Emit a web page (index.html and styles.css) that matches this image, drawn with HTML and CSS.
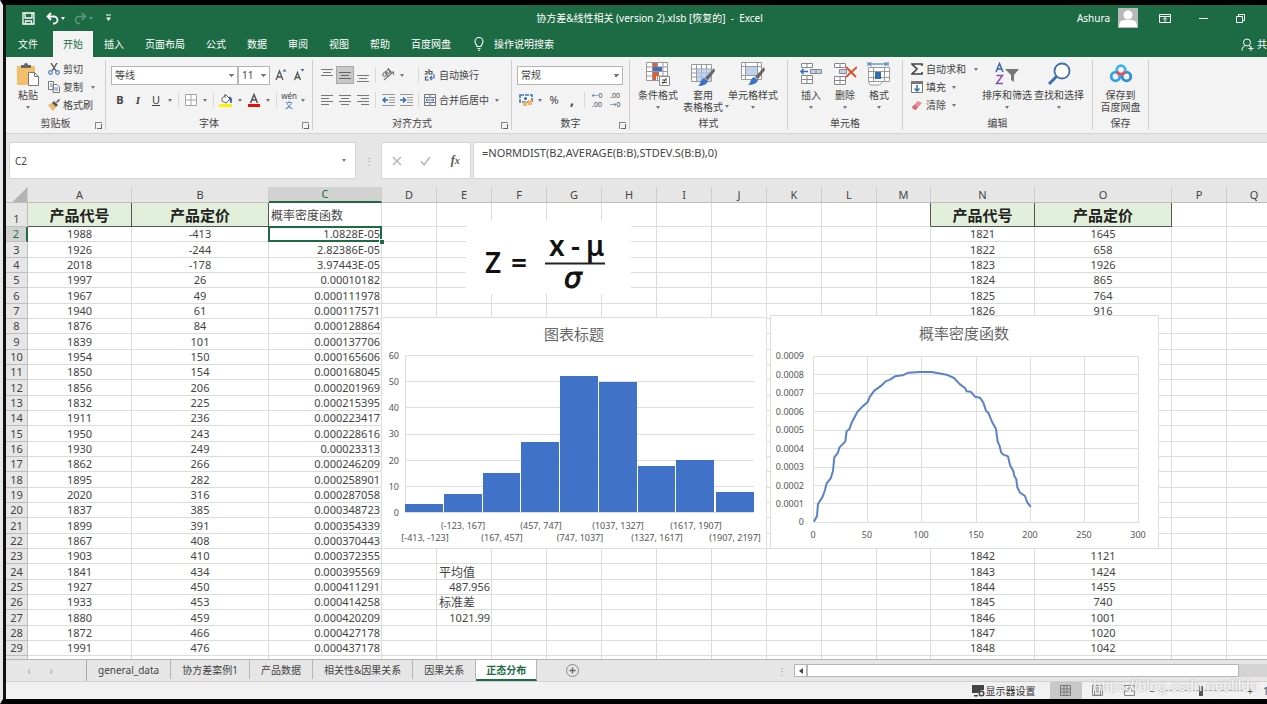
FILE: index.html
```html
<!DOCTYPE html>
<html lang="zh-CN">
<head>
<meta charset="utf-8">
<title>协方差&amp;线性相关 - Excel</title>
<link rel="stylesheet" href="styles.css">
</head>
<body>
<div class="app">
<header class="titlebar">
  <div class="quick">
    <button class="tb" aria-label="保存"><svg width="13" height="13" viewBox="0 0 13 13"><path d="M1 1h11v11H1zM3 1v5h7V1M3.500 12V9h6v3" fill="none" stroke="#fff" stroke-width="1.300"/></svg></button>
    <button class="tb" aria-label="撤消"><svg width="13" height="13" viewBox="0 0 13 13"><path d="M5 1L1.500 4.500 5 8M2 4.500h6a3.500 3.500 0 0 1 0 7H7" fill="none" stroke="#fff" stroke-width="1.800"/></svg></button>
    <span class="caret light"></span>
    <button class="tb dim" aria-label="恢复"><svg width="13" height="13" viewBox="0 0 13 13"><path d="M8 1l3.500 3.500L8 8M11 4.500H5a3.500 3.500 0 0 0 0 7h1" fill="none" stroke="#fff" stroke-width="1.500"/></svg></button>
    <span class="caret light dim"></span>
    <button class="tb" aria-label="自定义"><svg width="7" height="8" viewBox="0 0 7 8"><path d="M1 1h5" stroke="#fff"/><path d="M1 3.500h5L3.500 7z" fill="#fff"/></svg></button>
  </div>
  <div class="doc">协方差&amp;线性相关 (version 2).xlsb [恢复的]&nbsp; -&nbsp; Excel</div>
  <div class="account">
    <span class="user">Ashura</span>
    <svg class="avatar" width="20" height="20" viewBox="0 0 20 20"><path d="M0 0h20v20H0z" fill="#b9b9b9"/><circle cx="10" cy="7" r="4.500" fill="#fff"/><path d="M1 19c0-8 5-7 9-7s9-1 9 7z" fill="#fff"/></svg>
    <button class="tb" aria-label="功能区显示选项"><svg width="12" height="9" viewBox="0 0 12 9"><path d="M.5.5h11v8H.5zM.5 2.500h11M6 8V4M4 5.500l2-2 2 2" fill="none" stroke="#fff"/></svg></button>
    <button class="tb" aria-label="最小化"><svg width="9" height="3" viewBox="0 0 9 3"><path d="M0 1.500h9" stroke="#fff"/></svg></button>
    <button class="tb" aria-label="还原"><svg width="9" height="9" viewBox="0 0 9 9"><path d="M.5 2.500h6v6h-6zM2.500 2V.5h6v6H7" fill="none" stroke="#fff"/></svg></button>
  </div>
</header>
<nav class="tabs">
  <button class="file">文件</button><button class="active">开始</button><button>插入</button><button>页面布局</button><button>公式</button><button>数据</button><button>审阅</button><button>视图</button><button>帮助</button><button>百度网盘</button>
  <button class="tell"><svg width="10" height="14" viewBox="0 0 10 14"><path d="M3 9.500C3 7.500 1 7 1 4.500a4 4 0 0 1 8 0C9 7 7 7.500 7 9.500zM3.500 11.500h3M4 13.300h2" fill="none" stroke="#fff" stroke-width="1.100"/></svg>操作说明搜索</button>
  <button class="share"><svg width="13" height="13" viewBox="0 0 13 13"><circle cx="6" cy="4.500" r="3.500" fill="none" stroke="#fff"/><path d="M1 12.500C1 9 3 8 4.500 7.500M7.500 7.500l2 1.500M10 8v5M7.500 10.500h5" fill="none" stroke="#fff"/></svg>共享</button>
</nav>

<section class="ribbon">
  <div class="group clip">
    <div class="body">
      <button class="big"><svg width="24" height="25" viewBox="0 0 24 25"><path d="M1 4h18v19H1z" fill="#f2c06d"/><path d="M5 5V3h3a2 2 0 0 1 4 0h3v3H5z" fill="#666"/><path d="M12.500 10.500h6l4 4v9h-10z" fill="#fff" stroke="#777"/><path d="M18.500 10.500v4h4" fill="none" stroke="#777"/></svg><span>粘贴</span><i class="caret"></i></button>
      <div class="stack">
        <button><svg width="12" height="12" viewBox="0 0 12 12"><path d="M3 0l5 8M9 0L4 8" stroke="#555" stroke-width="1.400"/><circle cx="2.500" cy="9.500" r="1.800" fill="none" stroke="#4a7ebb" stroke-width="1.200"/><circle cx="9.500" cy="9.500" r="1.800" fill="none" stroke="#4a7ebb" stroke-width="1.200"/></svg>剪切</button>
        <button><svg width="12" height="12" viewBox="0 0 12 12"><path d="M.5.5h5v8h-5zM5 3.500h4l2.500 2.500v5.500H5z" fill="#fff" stroke="#777"/><path d="M2 3h2M2 5h2M6.500 7h3.500M6.500 9h3.500" stroke="#4a7ebb"/></svg>复制<i class="caret gap"></i></button>
        <button><svg width="12" height="12" viewBox="0 0 12 12"><path d="M0 6l4-2 4 4-3 4z" fill="#f2b668"/><path d="M4 4l2-2 4 4-2 2zM8 3l3-3 1 1-3 3z" fill="#555"/></svg>格式刷</button>
      </div>
    </div>
    <div class="foot">剪贴板<i class="launch"></i></div>
  </div>

  <div class="group font">
    <div class="rows">
      <div class="row"><select class="fontname" aria-label="字体"><option>等线</option></select><select class="fontsize" aria-label="字号"><option>11</option></select>
        <button class="ic" aria-label="增大字号"><svg width="14" height="14" viewBox="0 0 14 14"><path d="M2 12L5.500 3 9 12M3.500 9h4" fill="none" stroke="#555" stroke-width="1.300"/><path d="M8.500 3.500L10.500 1l2 2.500z" fill="#3b64a8"/></svg></button><button class="ic" aria-label="减小字号"><svg width="14" height="14" viewBox="0 0 14 14"><path d="M2.500 12l3-7.500 3 7.500M3.500 9.500h4" fill="none" stroke="#555" stroke-width="1.300"/><path d="M8.500 1h4l-2 2.500z" fill="#3b64a8"/></svg></button></div>
      <div class="row"><button class="ic"><b>B</b></button><button class="ic"><em>I</em></button><button class="ic"><u>U</u></button><i class="caret"></i><i class="sep"></i>
        <button class="ic" aria-label="边框"><svg width="12" height="12" viewBox="0 0 12 12"><path d="M.5.5h11v11H.5zM6 0v12M0 6h12" fill="#fff" stroke="#a5a5a5"/></svg></button><i class="caret"></i><i class="sep"></i>
        <button class="ic" aria-label="填充颜色"><svg width="14" height="14" viewBox="0 0 14 14"><path d="M3 5l4-3 4 4-4 4-4-2zM6 1v4" fill="#fff" stroke="#666"/><path d="M10 4c3 0 3 3 2 6z" fill="#3b64a8" stroke="#3b64a8"/><path d="M0 11h13v3H0z" fill="#fff100"/></svg></button><i class="caret"></i>
        <button class="ic" aria-label="字体颜色"><svg width="14" height="14" viewBox="0 0 14 14"><path d="M3.500 10L7 1.500l3.500 8.500M5 7h4" fill="none" stroke="#555" stroke-width="1.500"/><path d="M1 11h12v3H1z" fill="#e8110a"/></svg></button><i class="caret"></i><i class="sep"></i>
        <button class="ic wen"><span>wén</span><span>文</span></button><i class="caret"></i></div>
    </div>
    <div class="foot">字体<i class="launch"></i></div>
  </div>

  <div class="group align">
    <div class="rows">
      <div class="row"><button class="ic" aria-label="顶端对齐"><svg width="12" height="14" viewBox="0 0 12 14"><path d="M0 1.500h12M2 4.500h8M0 7.500h12" stroke="#777"/></svg></button><button class="ic on" aria-label="垂直居中"><svg width="12" height="14" viewBox="0 0 12 14"><path d="M0 4.500h12M2 7.500h8M0 10.500h12" stroke="#666"/></svg></button><button class="ic" aria-label="底端对齐"><svg width="12" height="14" viewBox="0 0 12 14"><path d="M0 7.500h12M2 10.500h8M0 13.500h12" stroke="#777"/></svg></button><i class="sep"></i>
        <button class="ic" aria-label="方向"><svg width="14" height="14" viewBox="0 0 14 14"><path d="M3 12L12 4M9 4h3.500v3" fill="none" stroke="#777" stroke-width="1.200"/><circle cx="3.500" cy="6.500" r="1.800" fill="none" stroke="#555"/><circle cx="7.500" cy="3.500" r="1.800" fill="none" stroke="#555"/><path d="M4 3l3 5M7 0l2 4" stroke="#555"/></svg></button><i class="caret"></i><i class="fill"></i><i class="sep"></i>
        <button class="lab"><svg width="12" height="14" viewBox="0 0 12 14"><path d="M5 12H1.500V9H4M5 1v5h3V3.500H5M1 3.500h2V6H.5" fill="none" stroke="#555" stroke-width="1.200"/><path d="M10 6v4H6.500M8 8l-2 2 2 2" fill="none" stroke="#3b74c0" stroke-width="1.200"/></svg>自动换行</button></div>
      <div class="row"><button class="ic" aria-label="左对齐"><svg width="12" height="12" viewBox="0 0 12 12"><path d="M0 1.500h12M0 4.500h8M0 7.500h12M0 10.500h8" stroke="#777"/></svg></button><button class="ic" aria-label="居中"><svg width="12" height="12" viewBox="0 0 12 12"><path d="M0 1.500h12M2 4.500h8M0 7.500h12M2 10.500h8" stroke="#777"/></svg></button><button class="ic" aria-label="右对齐"><svg width="12" height="12" viewBox="0 0 12 12"><path d="M0 1.500h12M4 4.500h8M0 7.500h12M4 10.500h8" stroke="#777"/></svg></button><i class="sep"></i>
        <button class="ic" aria-label="减少缩进"><svg width="13" height="12" viewBox="0 0 13 12"><path d="M0 .5h13M7 3.500h6M7 6h6M7 8.500h6M0 11.500h13" stroke="#999"/><path d="M6 6H1M3.500 3.500L1 6l2.500 2.500" fill="none" stroke="#2f6db5" stroke-width="1.500"/></svg></button><button class="ic" aria-label="增加缩进"><svg width="13" height="12" viewBox="0 0 13 12"><path d="M0 .5h13M7 3.500h6M7 6h6M7 8.500h6M0 11.500h13" stroke="#999"/><path d="M0 6h5M3 3.500L5.500 6 3 8.500" fill="none" stroke="#2f6db5" stroke-width="1.500"/></svg></button><i class="sep"></i>
        <button class="lab"><svg width="12" height="12" viewBox="0 0 12 12"><path d="M.5.5h11v11H.5zM0 3.500h12M0 8.500h12M6 0v3M6 9v3" fill="none" stroke="#777"/><path d="M2 6h8M3.500 4.500L2 6l1.500 1.500M8.500 4.500L10 6 8.500 7.500" fill="none" stroke="#3b74c0"/></svg>合并后居中<i class="caret"></i></button></div>
    </div>
    <div class="foot">对齐方式<i class="launch"></i></div>
  </div>

  <div class="group number">
    <div class="rows">
      <div class="row"><select class="numfmt" aria-label="数字格式"><option>常规</option></select></div>
      <div class="row"><button class="ic" aria-label="会计数字格式"><svg width="14" height="13" viewBox="0 0 14 13"><path d="M1 1h12v7H1z" fill="#fff" stroke="#3b74c0" stroke-width="1.600" stroke-dasharray="4 1"/><circle cx="6.500" cy="4.500" r="1.600" fill="#3b74c0"/><path d="M4 8h4v4H4zM9 6h4v5H9z" fill="#f2b668"/></svg></button><i class="caret"></i><button class="ic">%</button><button class="ic comma"><b>,</b></button><i class="sep"></i>
        <button class="ic dec"><span><i class="arr">←</i>0</span><span>.00</span></button><button class="ic dec"><span>.00</span><span><i class="arr">→</i>0</span></button></div>
    </div>
    <div class="foot">数字<i class="launch"></i></div>
  </div>

  <div class="group styles">
    <div class="body">
      <button class="big"><svg width="26" height="25" viewBox="0 0 26 25"><path d="M1.500.5h21v18h-21zM1 5h22M1 9.500h22M1 14h22M7.500 0v19M12.500 0v19M18 0v19" fill="#fff" stroke="#999"/><path d="M8 1h4v4H8z" fill="#d9603b"/><path d="M8 5h9v4H8z" fill="#3b74c0"/><path d="M8 10h6v4H8zM8 14h3v4H8z" fill="#d9603b"/><path d="M14.500 14.500h10v9h-10z" fill="#fff" stroke="#888"/><path d="M17 18h5M17 20.500h5M21.500 16l-4 6" stroke="#444"/></svg><span>条件格式</span><i class="caret"></i></button>
      <button class="big"><svg width="26" height="25" viewBox="0 0 26 25"><path d="M1.500 2.500h20v17h-20zM1 7h20M1 11h20M1 15h20M6.500 2v17M11.500 2v17M16.500 2v17" fill="#fff" stroke="#999"/><path d="M7 7h14v12H7z" fill="#a9c4e6" opacity=".7"/><path d="M24 6l1 3-7 9-3-2z" fill="#666"/><path d="M14 16l4 3c-1 4-6 5-10 5 3-2 2-6 6-8z" fill="#3b74c0"/></svg><span>套用<br>表格格式</span><i class="caret side"></i></button>
      <button class="big"><svg width="26" height="25" viewBox="0 0 26 25"><path d="M1.500.5h20v17h-20zM1 4.500h20M1 13.500h20M5.500 0v18M17.500 0v18" fill="#fff" stroke="#999"/><path d="M6 5h11v8H6z" fill="#bcd2ee"/><path d="M24 5l1 3-7 9-3-2z" fill="#666"/><path d="M14 15l4 3c-1 4-6 5-10 5 3-2 2-6 6-8z" fill="#3b74c0"/></svg><span>单元格样式</span><i class="caret"></i></button>
    </div>
    <div class="foot">样式</div>
  </div>

  <div class="group cells">
    <div class="body">
      <button class="big"><svg width="24" height="25" viewBox="0 0 24 25"><path d="M2.500 1.500h11v4h-11zM8 1v5M2.500 13.500h11v8h-11zM8 13v9M2 17.500h12" fill="#fff" stroke="#888"/><path d="M11.500 7.500h11v4h-11zM17 7v5" fill="#bcd2ee" stroke="#888"/><path d="M9 9.500H2M4.500 7L2 9.500 4.500 12" fill="none" stroke="#2f6db5" stroke-width="1.500"/></svg><span>插入</span><i class="caret"></i></button>
      <button class="big"><svg width="24" height="25" viewBox="0 0 24 25"><path d="M1.500 1.500h11v4h-11zM7 1v5M1.500 14.500h11v8h-11zM7 14v9M1 18.500h12" fill="#fff" stroke="#888"/><path d="M6.500 7.500h7v4h-7z" fill="#bcd2ee" stroke="#888"/><path d="M13 5l10 10M24 5L13 15" stroke="#d9532c" stroke-width="2"/></svg><span>删除</span><i class="caret"></i></button>
      <button class="big"><svg width="24" height="25" viewBox="0 0 24 25"><path d="M1.500 5.500h21v14h-21zM1 9.500h22M1 15.500h22M6.500 5v15M17.500 5v15M1.500 20l2 3h9l3-3" fill="#fff" stroke="#999"/><path d="M8 10h6v7H8z" fill="#2f6db5"/><path d="M2 2h18M4.500 0L2 2l2.500 2M17.500 0L20 2l-2.500 2M1 0v4M21 0v4" fill="none" stroke="#2f6db5"/></svg><span>格式</span><i class="caret"></i></button>
    </div>
    <div class="foot">单元格</div>
  </div>

  <div class="group edit">
    <div class="body">
      <div class="stack">
        <button><svg width="12" height="12" viewBox="0 0 12 12"><path d="M11 3V1H1l5 5-5 5h10V9" fill="none" stroke="#444" stroke-width="1.600"/></svg>自动求和<i class="caret gap"></i></button>
        <button><svg width="12" height="12" viewBox="0 0 12 12"><path d="M.5.5h11v11H.5z" fill="#fff" stroke="#777"/><path d="M0 0h12v3H0z" fill="#777"/><path d="M6 4v6M3.500 7.500L6 10l2.500-2.500" fill="none" stroke="#2f6db5" stroke-width="1.500"/></svg>填充<i class="caret"></i></button>
        <button><svg width="12" height="12" viewBox="0 0 12 12"><path d="M1 8l6-6 4 2-6 6z" fill="#e58a97"/><path d="M1 8l2-2 4 2-2 3-3-1z" fill="#d7697b"/></svg>清除<i class="caret"></i></button>
      </div>
      <button class="big"><svg width="26" height="25" viewBox="0 0 26 25"><path d="M2 10L5.500 1.500 9 10M3 7h5" fill="none" stroke="#3b64b0" stroke-width="1.500"/><path d="M2.500 13.500h6l-6 8h6.500" fill="none" stroke="#8a4fb5" stroke-width="1.500"/><path d="M11 7h14l-5 6v7l-3-2v-5z" fill="#777"/></svg><span>排序和筛选</span><i class="caret"></i></button>
      <button class="big"><svg width="26" height="25" viewBox="0 0 26 25"><circle cx="16" cy="9" r="7.500" fill="#fff" stroke="#3f6fae" stroke-width="1.800"/><path d="M10.500 14.500L3 22" stroke="#3f6fae" stroke-width="3"/></svg><span>查找和选择</span><i class="caret"></i></button>
    </div>
    <div class="foot">编辑</div>
  </div>

  <div class="group save">
    <div class="body">
      <button class="big"><svg width="24" height="25" viewBox="0 0 24 25"><circle cx="6.500" cy="14.500" r="4.300" fill="none" stroke="#2ca5e8" stroke-width="2.800"/><circle cx="17.500" cy="14.500" r="4.300" fill="none" stroke="#2b8fe0" stroke-width="2.800"/><circle cx="12" cy="8" r="4.300" fill="none" stroke="#35b6ea" stroke-width="2.800"/><path d="M8 9.500a4.300 4.300 0 0 0 8 0" fill="none" stroke="#ee4b55" stroke-width="2.800"/></svg><span>保存到<br>百度网盘</span></button>
    </div>
    <div class="foot">保存</div>
  </div>
</section>

<section class="formulabar">
  <div class="namebox"><input value="C2" aria-label="名称框"><i class="caret"></i></div>
  <span class="dots">⋮</span>
  <div class="fx">
    <button aria-label="取消"><svg width="10" height="10" viewBox="0 0 10 10"><path d="M1 1l8 8M9 1L1 9" stroke="#b5b5b5" stroke-width="1.400"/></svg></button>
    <button aria-label="输入"><svg width="11" height="10" viewBox="0 0 11 10"><path d="M1 5l3 4 6-8" fill="none" stroke="#b5b5b5" stroke-width="1.400"/></svg></button>
    <button class="fn">f<small>x</small></button>
  </div>
  <input class="formula" aria-label="编辑栏" value="=NORMDIST(B2,AVERAGE(B:B),STDEV.S(B:B),0)">
</section>

<main class="sheet">
<table>
<colgroup><col class="c-h"><col class="c-a"><col class="c-b"><col class="c-c"><col class="c-s" span="9"><col class="c-m"><col class="c-a"><col class="c-b"><col class="c-s"><col></colgroup>
<thead><tr><th class="corner"><th>A<th>B<th class="sel">C<th>D<th>E<th>F<th>G<th>H<th>I<th>J<th>K<th>L<th>M<th>N<th>O<th>P<th>Q</thead>
<tbody>
<tr class="first"><th>1<td class="hd">产品代号<td class="hd">产品定价<td class="txt">概率密度函数<td><td><td><td><td><td><td><td><td><td class="pre"><td class="hd">产品代号<td class="hd">产品定价<td><td>
<tr><th class="sel">2<td>1988<td>-413<td class="cur">1.0828E-05<td><td><td><td><td><td><td><td><td><td><td>1821<td>1645<td><td>
<tr><th>3<td>1926<td>-244<td>2.82386E-05<td><td><td><td><td><td><td><td><td><td><td>1822<td>658<td><td>
<tr><th>4<td>2018<td>-178<td>3.97443E-05<td><td><td><td><td><td><td><td><td><td><td>1823<td>1926<td><td>
<tr><th>5<td>1997<td>26<td>0.00010182<td><td><td><td><td><td><td><td><td><td><td>1824<td>865<td><td>
<tr><th>6<td>1967<td>49<td>0.000111978<td><td><td><td><td><td><td><td><td><td><td>1825<td>764<td><td>
<tr><th>7<td>1940<td>61<td>0.000117571<td><td><td><td><td><td><td><td><td><td><td>1826<td>916<td><td>
<tr><th>8<td>1876<td>84<td>0.000128864<td><td><td><td><td><td><td><td><td><td><td><td><td><td>
<tr><th>9<td>1839<td>101<td>0.000137706<td><td><td><td><td><td><td><td><td><td><td><td><td><td>
<tr><th>10<td>1954<td>150<td>0.000165606<td><td><td><td><td><td><td><td><td><td><td><td><td><td>
<tr><th>11<td>1850<td>154<td>0.000168045<td><td><td><td><td><td><td><td><td><td><td><td><td><td>
<tr><th>12<td>1856<td>206<td>0.000201969<td><td><td><td><td><td><td><td><td><td><td><td><td><td>
<tr><th>13<td>1832<td>225<td>0.000215395<td><td><td><td><td><td><td><td><td><td><td><td><td><td>
<tr><th>14<td>1911<td>236<td>0.000223417<td><td><td><td><td><td><td><td><td><td><td><td><td><td>
<tr><th>15<td>1950<td>243<td>0.000228616<td><td><td><td><td><td><td><td><td><td><td><td><td><td>
<tr><th>16<td>1930<td>249<td>0.00023313<td><td><td><td><td><td><td><td><td><td><td><td><td><td>
<tr><th>17<td>1862<td>266<td>0.000246209<td><td><td><td><td><td><td><td><td><td><td><td><td><td>
<tr><th>18<td>1895<td>282<td>0.000258901<td><td><td><td><td><td><td><td><td><td><td><td><td><td>
<tr><th>19<td>2020<td>316<td>0.000287058<td><td><td><td><td><td><td><td><td><td><td><td><td><td>
<tr><th>20<td>1837<td>385<td>0.000348723<td><td><td><td><td><td><td><td><td><td><td><td><td><td>
<tr><th>21<td>1899<td>391<td>0.000354339<td><td><td><td><td><td><td><td><td><td><td><td><td><td>
<tr><th>22<td>1867<td>408<td>0.000370443<td><td><td><td><td><td><td><td><td><td><td><td><td><td>
<tr><th>23<td>1903<td>410<td>0.000372355<td><td><td><td><td><td><td><td><td><td><td>1842<td>1121<td><td>
<tr><th>24<td>1841<td>434<td>0.000395569<td><td class="txt">平均值<td><td><td><td><td><td><td><td><td>1843<td>1424<td><td>
<tr><th>25<td>1927<td>450<td>0.000411291<td><td class="num">487.956<td><td><td><td><td><td><td><td><td>1844<td>1455<td><td>
<tr><th>26<td>1933<td>453<td>0.000414258<td><td class="txt">标准差<td><td><td><td><td><td><td><td><td>1845<td>740<td><td>
<tr><th>27<td>1880<td>459<td>0.000420209<td><td class="num">1021.99<td><td><td><td><td><td><td><td><td>1846<td>1001<td><td>
<tr><th>28<td>1872<td>466<td>0.000427178<td><td><td><td><td><td><td><td><td><td><td>1847<td>1020<td><td>
<tr><th>29<td>1991<td>476<td>0.000437178<td><td><td><td><td><td><td><td><td><td><td>1848<td>1042<td><td>
<tr><th><td><td><td><td><td><td><td><td><td><td><td><td><td><td><td><td><td>
</tbody>
</table>

<svg class="zscore" viewBox="466 221 165 73" width="165" height="73">
  <text x="485" y="273" class="zt">Z</text><text x="511" y="273" class="zt">=</text>
  <text x="549" y="256" class="zt">x</text><text x="571" y="256" class="zt">-</text><text x="586" y="256" class="zt">μ</text>
  <path d="M545 263.500h60" stroke="#222" stroke-width="2"/>
  <text x="564" y="288" class="zt it">σ</text>
</svg>

<svg class="hist" viewBox="382 318 384 230" width="384" height="230">
  <text x="574" y="340" class="ct">图表标题</text>
  <path d="M405 355.500h349M405 381.500h349M405 407.500h349M405 434.500h349M405 460.500h349M405 486.500h349M405 512.500h349M405.500 355v157" stroke="#dedede" fill="none"/>
  <path d="M405 504h38v8h-38zM444 494h38v18h-38zM483 473h37v39h-37zM521 442h38v70h-38zM560 376h38v136h-38zM599 382h38v130h-38zM638 466h37v46h-37zM676 460h38v52h-38zM716 492h38v20h-38z" fill="#4072c7"/>
  <g class="ax end"><text x="399" y="359">60</text><text x="399" y="385">50</text><text x="399" y="411">40</text><text x="399" y="437">30</text><text x="399" y="464">20</text><text x="399" y="490">10</text><text x="399" y="516">0</text></g>
  <g class="ax mid"><text x="463" y="529">(-123, 167]</text><text x="541" y="529">(457, 747]</text><text x="618" y="529">(1037, 1327]</text><text x="696" y="529">(1617, 1907]</text><text x="425" y="541">[-413, -123]</text><text x="502" y="541">(167, 457]</text><text x="580" y="541">(747, 1037]</text><text x="657" y="541">(1327, 1617]</text><text x="735" y="541">(1907, 2197]</text></g>
</svg>

<svg class="density" viewBox="771 316 387 232" width="387" height="232">
  <text x="964" y="339" class="ct">概率密度函数</text>
  <path d="M813 356.500h326M813 374.500h326M813 393.500h326M813 411.500h326M813 430.500h326M813 448.500h326M813 467.500h326M813 485.500h326M813 503.500h326M813 522.500h326M813.500 356v166M867.500 356v166M921.500 356v166M976.500 356v166M1030.500 356v166M1084.500 356v166M1138.500 356v166" stroke="#dedede" fill="none"/>
  <path transform="translate(760 370) scale(.3333)" d="M163 453L171 438 174 402 188 380 195 360 200 340 212 325 219 303 223 262 234 248 238 233 256 214 260 183 268 178 275 158 292 126 307 110 323 96 330 80 343 62 365 46 377 34 390 29 405 19 428 16 445 8 480 6 515 6 560 14 582 24 600 43 615 54 620 64 632 65 645 80 660 83 670 98 678 122 685 128 696 155 708 177 713 215 718 225 724 248 730 254 744 259 750 285 760 303 763 318 769 328 772 352 780 368 795 378 802 397 811 409" fill="none" stroke="#5a82c8" stroke-width="6" stroke-linejoin="round" stroke-linecap="round"/>
  <g class="ax end"><text x="804" y="359">0.0009</text><text x="804" y="378">0.0008</text><text x="804" y="396">0.0007</text><text x="804" y="415">0.0006</text><text x="804" y="433">0.0005</text><text x="804" y="452">0.0004</text><text x="804" y="470">0.0003</text><text x="804" y="489">0.0002</text><text x="804" y="507">0.0001</text><text x="804" y="525">0</text></g>
  <g class="ax mid"><text x="813" y="538">0</text><text x="867" y="538">50</text><text x="921" y="538">100</text><text x="976" y="538">150</text><text x="1030" y="538">200</text><text x="1084" y="538">250</text><text x="1138" y="538">300</text></g>
</svg>
</main>

<nav class="sheettabs">
  <button class="nav" aria-label="上一个">‹</button><button class="nav" aria-label="下一个">›</button>
  <div class="list"><button>general_data</button><button>协方差案例1</button><button>产品数据</button><button>相关性&amp;因果关系</button><button>因果关系</button><button class="active">正态分布</button></div>
  <button class="add" aria-label="新工作表"><svg width="13" height="13" viewBox="0 0 13 13"><circle cx="6.500" cy="6.500" r="6" fill="none" stroke="#888"/><path d="M6.500 3.500v6M3.500 6.500h6" stroke="#666" stroke-width="1.300"/></svg></button>
  <span class="dots">⋮</span>
  <div class="hscroll"><button aria-label="向左滚动"><svg width="4" height="6" viewBox="0 0 4 6"><path d="M4 0v6L0 3z" fill="#444"/></svg></button><div class="track"><div class="thumb"></div></div></div>
</nav>

<footer class="status">
  <button class="disp"><svg width="13" height="12" viewBox="0 0 13 12"><path d="M0 0h12v5H9L6 8H0zM2 10h4v1.500H2z" fill="#444"/><circle cx="9.500" cy="8.500" r="2.300" fill="none" stroke="#444" stroke-width="1.500"/></svg>显示器设置</button>
  <button class="view on" aria-label="普通"><svg width="11" height="11" viewBox="0 0 11 11"><path d="M.5.5h10v10H.5zM4 0v11M7 0v11M0 4h11M0 7h11" fill="none" stroke="#777"/></svg></button>
  <button class="view" aria-label="页面布局"><svg width="11" height="11" viewBox="0 0 11 11"><path d="M.5.5h10v10H.5zM2.500 3h6v7h-6zM4 5h3M4 7h3" fill="none" stroke="#888"/></svg></button>
  <button class="view" aria-label="分页预览"><svg width="11" height="11" viewBox="0 0 11 11"><path d="M.5.5h10v10H.5zM0 6h4V3h3v3h4" fill="none" stroke="#888"/></svg></button>
  <div class="zoom"><span>−</span><input type="range" aria-label="显示比例" value="50"><span>+</span></div>
  <span class="pct">100%</span>
  <span class="mark">https://blog.csdn.net/lildn</span>
</footer>
</div>
</body>
</html>
```
FILE: styles.css
```css
* { box-sizing: border-box; }
html, body { margin: 0; height: 100%; }
body {
  background: #000;
  overflow: hidden;
  font: 10px/14px "Noto Sans", "Noto Sans CJK SC", sans-serif;
  color: #444;
}
button, input, select { font: inherit; color: inherit; border: 0; background: none; padding: 0; margin: 0; }
button { display: flex; align-items: center; justify-content: center; white-space: nowrap; }
svg { display: block; flex: none; }
i { font-style: normal; }

.app {
  height: 100vh;
  border: solid #000;
  border-width: 5px 0 5px 3px;
  border-left-color: #e9e9e9;
  box-shadow: inset 3px 0 #111;
  padding-left: 3px;
  display: flex;
  flex-direction: column;
  background: #e6e6e6;
}
.app > * { flex: none; }

.caret { width: 10px; flex: none; display: flex; justify-content: center; }
.caret::after { content: ""; border: 2px solid transparent; border-top: 3px solid #777; border-bottom: 0; }
.caret.light::after { border-top-color: #fff; }
.caret.gap { margin-left: 2px; }
.dim { opacity: .3; }

/* Title bar */
.titlebar { height: 26px; background: #1d6b45; color: #fff; display: grid; grid-template-columns: 1fr auto 1fr; align-items: center; padding-left: 16px; }
.quick { display: flex; align-items: center; }
.quick .tb { width: 12px; }
.quick .tb:first-child { margin-right: 12px; }
.quick .tb:nth-child(4) { margin-left: 6px; }
.quick .tb:last-child { margin-left: 6px; }
.doc { padding-left: 10px; white-space: pre; }
.account { display: flex; align-items: center; justify-content: flex-end; padding-right: 22px; }
.user { margin-right: 8px; }
.avatar { margin-right: 21px; }
.account .tb + .tb { margin-left: 28px; }

/* Ribbon tabs */
.tabs { height: 26px; background: #1d6b45; display: flex; gap: 1px; padding-left: 2px; color: #fff; }
.tabs button { padding: 0 10px; flex: none; }
.tabs .file { margin-right: 4px; }
.tabs .active { background: #f3f3f3; color: #1d6b45; }
.tabs .tell { gap: 10px; padding: 0; margin-left: 12px; }
.tabs .share { margin-left: auto; width: 26px; padding: 0; gap: 3px; justify-content: flex-start; }

/* Ribbon */
.ribbon { height: 77px; background: #f3f3f3; display: flex; border-bottom: 1px solid #d4d4d4; padding: 3px 0; }
.group { display: flex; flex-direction: column; border-right: 1px solid #cfcfcf; flex: none; }
.clip { width: 100px; }
.font { width: 207px; }
.align { width: 199px; }
.number { width: 118px; }
.styles { width: 158px; }
.cells { width: 115px; }
.edit { width: 190px; }
.save { width: 56px; }
.body { flex: 1; display: flex; justify-content: center; }
.foot { height: 14px; display: flex; align-items: center; justify-content: center; position: relative; }
.launch { position: absolute; right: 3px; bottom: 1px; width: 7px; height: 7px; border: solid #888; border-width: 1px 0 0 1px; }
.launch::after { content: ""; position: absolute; right: 0; bottom: 0; width: 4px; height: 4px; border: solid #666; border-width: 0 1px 1px 0; }
.big { flex-direction: column; justify-content: flex-start; line-height: 12px; position: relative; padding-top: 2px; }
.big span { margin-top: 2px; }
.big .caret { height: 12px; align-items: center; }
.big .side { position: absolute; right: -9px; bottom: 4px; }
.stack { display: flex; flex-direction: column; }
.stack button { height: 18px; gap: 3px; justify-content: flex-start; }
.clip .body { justify-content: flex-start; padding-left: 10px; gap: 8px; }
.styles .body { gap: 5px; padding-right: 1px; }
.cells .big { width: 34px; }
.edit .body { justify-content: flex-start; padding-left: 8px; }
.edit .stack { width: 70px; }
.edit .big { width: 52px; }

.rows { flex: 1; padding: 5px 0 0 5px; display: flex; flex-direction: column; gap: 5px; }
.row { display: flex; height: 20px; align-items: center; }
.ic { width: 18px; height: 18px; flex: none; font-size: 11px; }
.ic em { font-family: "Liberation Serif", serif; font-weight: bold; }
.comma { font-size: 14px; }
.on { background: #c8c8c8; border: 1px solid #a8a8a8; }
.sep { width: 1px; height: 16px; background: #d9d9d9; margin: 0 3px; flex: none; }
.fill { width: 8px; }
.lab { gap: 3px; margin-left: 2px; }
.wen, .dec { flex-direction: column; font-size: 8px; line-height: 9px; }
.dec { font-size: 7px; }
.wen span:last-child, .arr { color: #2f6db5; }
select {
  appearance: none; height: 19px; border: 1px solid #b5b5b5; padding-left: 3px;
  background: #fff conic-gradient(from -45deg at 50% 100%, #777 90deg, #fff 0) no-repeat right 3px center / 6px 3px;
}
.fontname { width: 127px; }
.fontsize { width: 32px; margin-right: 2px; }
.numfmt { width: 106px; }

/* Formula bar */
.formulabar { height: 53px; display: flex; padding: 8px 0; }
.namebox { width: 347px; margin-left: 3px; background: #fff; border: 1px solid #d6d6d6; display: flex; align-items: center; padding: 0 6px 0 5px; }
.namebox input { flex: 1; min-width: 0; }
.dots { width: 25px; text-align: center; align-self: center; color: #999; }
.fx { width: 90px; background: #fff; border: 1px solid #d6d6d6; display: flex; }
.fx button { flex: 1; }
.fn { font: italic bold 12px "Liberation Serif", serif; color: #555; }
.formula { flex: 1; min-width: 0; margin-left: 2px; background: #fff; border: 1px solid #d6d6d6; border-right: 0; padding: 0 8px 15px; font-size: 11px; }

/* Worksheet */
.sheet { flex: 1; min-height: 0; position: relative; overflow: hidden; background: #fff; }
table { table-layout: fixed; border-spacing: 0; width: calc(100% + 15px); font-size: 11px; line-height: 14px; }
.c-h { width: 22px; }
.c-a { width: 104px; }
.c-b { width: 137px; }
.c-c { width: 113px; }
.c-s { width: 55px; }
.c-m { width: 54px; }
th, td { padding: 0; height: 15px; text-align: center; border: solid #dcdcdc; border-width: 0 1px 1px 0; white-space: nowrap; }
th { background: #e6e6e6; font-weight: normal; border-color: #bdbdbd; }
thead th { height: 16px; line-height: 14px; border-right-color: #cdcdcd; }
tbody tr:nth-child(3n) > * { height: 16px; }
tbody tr > :nth-child(4) { text-align: right; padding-right: 1px; }
.corner { background: linear-gradient(135deg, #e6e6e6 60%, #b5b5b5 60%); }
.sel { background: #d2d2d2; color: #1d6b45; }
thead .sel { border-bottom: 2px solid #1d6b45; }
tbody .sel { border-right: 2px solid #1d6b45; }
.first > * { height: 24px; }
.first th { vertical-align: bottom; }
.hd { background: #e2efda; font: bold 15px/20px "Noto Sans CJK SC", sans-serif; color: #222; border-color: #555; }
.pre { border-right-color: #555; }
tbody tr > .txt { text-align: left; padding-left: 2px; font: 12px/14px "Noto Sans CJK SC", sans-serif; }
.num { text-align: right; padding-right: 1px; }
.cur { position: relative; }
.cur::before { content: ""; position: absolute; inset: -1px; border: 2px solid #1d6b45; }
.cur::after { content: ""; position: absolute; right: -3px; bottom: -3px; width: 4px; height: 4px; background: #1d6b45; border: solid #fff; border-width: 1px 0 0 1px; box-sizing: content-box; }

/* Floating objects on the sheet */
.zscore, .hist, .density { position: absolute; background: #fff; }
.zscore { left: 460px; top: 34px; }
.hist { left: 376px; top: 131px; outline: 1px solid #dedede; }
.density { left: 765px; top: 129px; outline: 1px solid #dedede; }
.zt { font: 600 28px "Noto Sans", sans-serif; fill: #111; }
.it { font-family: "DejaVu Sans", sans-serif; font-style: oblique; font-weight: normal; stroke: #111; }
.ct { font: 15px "Noto Sans CJK SC", sans-serif; fill: #666; text-anchor: middle; }
.ax { font: 9px "Noto Sans", sans-serif; fill: #555; }
.end { text-anchor: end; }
.mid { text-anchor: middle; }

/* Sheet tabs */
.sheettabs { height: 23px; border-top: 1px solid #b5b5b5; border-bottom: 1px solid #d0d0d0; display: flex; align-items: center; }
.nav { width: 22px; color: #aaa; font-size: 12px; }
.nav:first-child { margin-left: 12px; }
.list { display: flex; align-self: stretch; margin-left: 24px; border-left: 1px solid #aaa; }
.list button { padding: 0 11px; border-right: 1px solid #b5b5b5; margin-bottom: 2px; }
.list .active { background: #fff; color: #1d6b45; font-weight: bold; border-bottom: 2px solid #1d6b45; padding: 0 10px; margin: 0; }
.add { margin-left: 29px; }
.sheettabs .dots { margin-left: auto; }
.hscroll { width: 37.5%; display: flex; align-items: center; height: 13px; }
.hscroll button { width: 13px; height: 13px; background: #fff; border: 1px solid #b5b5b5; flex: none; }
.track { flex: 1; height: 13px; background: #d4d4d4; }
.thumb { width: 94%; height: 13px; background: #fff; border: 1px solid #b5b5b5; }

/* Status bar */
.status { height: 17px; background: #f1f1f1; display: flex; align-items: center; justify-content: flex-end; position: relative; }
.disp { gap: 1px; margin-right: 14px; color: #333; }
.view { width: 32px; height: 17px; }
.view.on { border: 0; }
.zoom { display: flex; align-items: center; gap: 4px; margin-left: 4px; }
.zoom input { appearance: none; width: 84px; height: 1px; background: #aaa; }
.zoom input::-webkit-slider-thumb { appearance: none; width: 4px; height: 10px; background: #555; }
.pct { width: 4px; margin-left: 10px; }
.mark { position: absolute; right: 9px; bottom: 4px; font: 15px/18px "Liberation Sans", sans-serif; color: rgba(255, 255, 255, .9); text-shadow: 0 0 2px #999; }
```
